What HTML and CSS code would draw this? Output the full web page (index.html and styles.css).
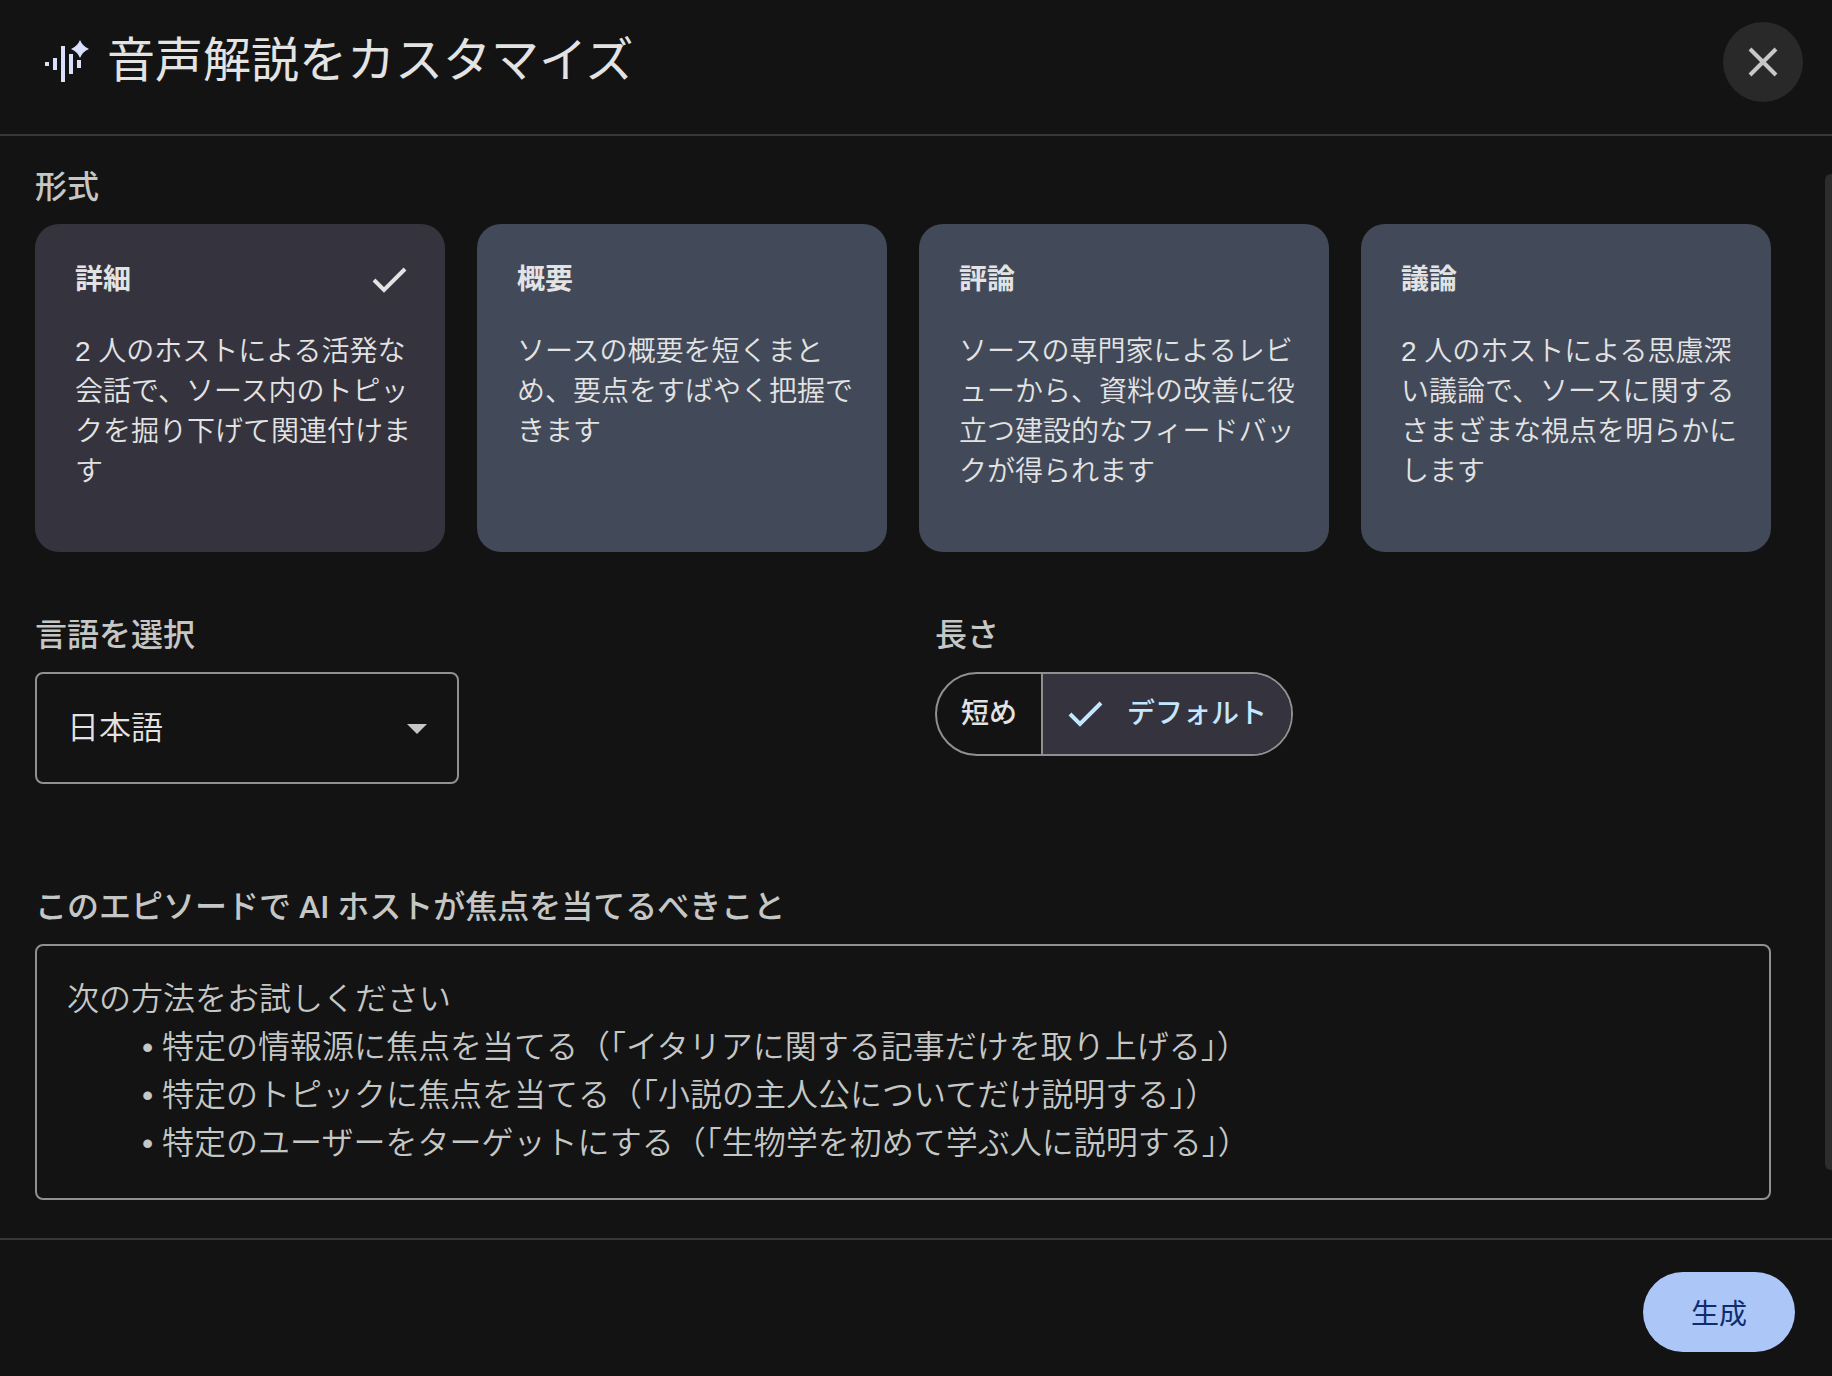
FILE: index.html
```html
<!DOCTYPE html>
<html lang="ja">
<head>
<meta charset="utf-8">
<title>音声解説をカスタマイズ</title>
<meta name="viewport" content="width=device-width, initial-scale=1">
<link rel="stylesheet" href="styles.css">
</head>
<body>
<form class="dialog">
  <header class="dialog-header">
    <svg class="audio-icon" viewBox="0 0 48 48" aria-hidden="true">
      <path d="M1 24h4v4H1zM9 20h4v12H9zM17 8h4v36h-4zM25 16h4v20h-4zM33 22h4v8h-4z"/>
      <path d="M36 2Q38.600 8.400 45 11Q38.600 13.600 36 20Q33.400 13.600 27 11Q33.400 8.400 36 2z"/>
    </svg>
    <h1 class="dialog-title">音声解説をカスタマイズ</h1>
    <button class="close-button" type="button" aria-label="閉じる">
      <svg class="close-icon" viewBox="0 0 32 32" aria-hidden="true"><path d="M3 3l26 26M29 3L3 29"/></svg>
    </button>
  </header>

  <main class="dialog-body">
    <fieldset class="group">
      <legend class="field-label">形式</legend>
      <div class="format-grid">
        <label class="format-card">
          <input class="visually-hidden" type="radio" name="format" value="deep" checked>
          <span class="card-head"><span class="card-title">詳細</span>
            <svg class="check-icon" viewBox="0 0 36 28" aria-hidden="true"><path d="M3 14l10 10L34 3"/></svg></span>
          <span class="card-text">2 人のホストによる活発な会話で、ソース内のトピックを掘り下げて関連付けます</span>
        </label>
        <label class="format-card">
          <input class="visually-hidden" type="radio" name="format" value="brief">
          <span class="card-head"><span class="card-title">概要</span></span>
          <span class="card-text">ソースの概要を短くまとめ、要点をすばやく把握できます</span>
        </label>
        <label class="format-card">
          <input class="visually-hidden" type="radio" name="format" value="critique">
          <span class="card-head"><span class="card-title">評論</span></span>
          <span class="card-text">ソースの専門家によるレビューから、資料の改善に役立つ建設的なフィードバックが得られます</span>
        </label>
        <label class="format-card">
          <input class="visually-hidden" type="radio" name="format" value="debate">
          <span class="card-head"><span class="card-title">議論</span></span>
          <span class="card-text">2 人のホストによる思慮深い議論で、ソースに関するさまざまな視点を明らかにします</span>
        </label>
      </div>
    </fieldset>

    <div class="options">
      <div class="group">
        <label class="field-label" for="language">言語を選択</label>
        <div class="select-box">
          <select class="select" id="language"><option>日本語</option></select>
          <svg class="select-arrow" viewBox="0 0 20 10" aria-hidden="true"><path d="M0 0h20L10 10z"/></svg>
        </div>
      </div>
      <fieldset class="group">
        <legend class="field-label">長さ</legend>
        <div class="segments">
          <label class="segment">
            <input class="visually-hidden" type="radio" name="length" value="short">
            <span class="segment-text">短め</span>
          </label>
          <label class="segment">
            <input class="visually-hidden" type="radio" name="length" value="default" checked>
            <svg class="check-icon" viewBox="0 0 36 28" aria-hidden="true"><path d="M3 14l10 10L34 3"/></svg>
            <span class="segment-text">デフォルト</span>
          </label>
        </div>
      </fieldset>
    </div>

    <div class="group">
      <label class="field-label" for="focus">このエピソードで AI ホストが焦点を当てるべきこと</label>
      <textarea class="focus-input" id="focus" placeholder="次の方法をお試しください
&#9;• 特定の情報源に焦点を当てる（「イタリアに関する記事だけを取り上げる」）
&#9;• 特定のトピックに焦点を当てる（「小説の主人公についてだけ説明する」）
&#9;• 特定のユーザーをターゲットにする（「生物学を初めて学ぶ人に説明する」）"></textarea>
    </div>
    <div class="scroll-thumb" aria-hidden="true"></div>
  </main>

  <footer class="dialog-footer">
    <button class="generate-button" type="submit">生成</button>
  </footer>
</form>
</body>
</html>
```
FILE: styles.css
```css
:root {
  --surface: #131313;
  --divider: #37373d;
  --outline: #8e918f;
  --text: #e3e3e3;
  --text-soft: #c4c7c5;
  --selected: #35343e;
  --card: #424a59;
  --accent: #c2e7ff;
}

* {
  box-sizing: border-box;
}

body {
  margin: 0;
  background: var(--surface);
  color: var(--text);
  font-family: Roboto, "Noto Sans CJK JP", sans-serif;
}

button,
select,
textarea {
  font: inherit;
  color: inherit;
}

.dialog {
  display: flex;
  flex-direction: column;
  min-height: 100vh;
}

.dialog-header {
  display: flex;
  align-items: center;
  gap: 15px;
  height: 136px;
  padding: 0 29px 10px 44px;
  border-bottom: 2px solid var(--divider);
}

.audio-icon {
  width: 48px;
  height: 48px;
  fill: #d8e0fb;
}

.dialog-title {
  flex: 1;
  margin: 0;
  padding-bottom: 2px;
  font-size: 48px;
  font-weight: 400;
  line-height: 64px;
}

.close-button {
  display: grid;
  place-items: center;
  width: 80px;
  height: 80px;
  padding: 0;
  border: 0;
  border-radius: 50%;
  background: #292929;
}

.close-icon {
  width: 32px;
  height: 32px;
  fill: none;
  stroke: #c7c7c7;
  stroke-width: 4;
}

.dialog-body {
  position: relative;
  flex: 1;
  display: flex;
  flex-direction: column;
  padding: 31px 61px 38px 35px;
}

.group {
  display: flex;
  flex-direction: column;
  min-width: 0;
  margin: 0;
  padding: 0;
  border: 0;
}

.field-label {
  display: block;
  margin-bottom: 17px;
  padding: 0;
  color: var(--text-soft);
  font-size: 32px;
  font-weight: 500;
  line-height: 40px;
}

.format-grid {
  display: grid;
  grid-template-columns: repeat(4, 1fr);
  gap: 32px;
}

.format-card {
  position: relative;
  display: flex;
  flex-direction: column;
  gap: 32px;
  min-height: 328px;
  padding: 36px 32px 32px 40px;
  border-radius: 24px;
  background: var(--card);
  font-size: 28px;
  line-height: 40px;
}

.format-card:has(:checked) {
  background: var(--selected);
}

.card-head {
  display: flex;
  align-items: center;
  justify-content: space-between;
  padding-right: 6px;
}

.card-title {
  font-weight: 700;
}

.card-text {
  font-family: "Liberation Sans", "Noto Sans CJK JP", sans-serif;
  font-weight: 350;
}

.check-icon {
  width: 36px;
  height: 28px;
  fill: none;
  stroke: currentColor;
  stroke-width: 4;
}

.options {
  display: grid;
  grid-template-columns: 1fr 1fr;
  gap: 64px;
  padding: 63px 0 103px;
}

.select-box {
  position: relative;
  width: 424px;
}

.select {
  appearance: none;
  width: 100%;
  height: 112px;
  padding: 0 80px 0 30px;
  border: 2px solid var(--outline);
  border-radius: 8px;
  background: transparent;
  font-size: 32px;
  font-weight: 350;
}

.select-arrow {
  position: absolute;
  top: 52px;
  right: 32px;
  width: 20px;
  height: 10px;
  fill: var(--text-soft);
  pointer-events: none;
}

.segments {
  display: flex;
  align-self: flex-start;
  height: 84px;
  overflow: hidden;
  border: 2px solid var(--outline);
  border-radius: 42px;
}

.segment {
  position: relative;
  display: flex;
  align-items: center;
  gap: 24px;
  padding: 0 24px;
  font-size: 28px;
  font-weight: 500;
}

.segment-text {
  padding-bottom: 6px;
}

.segment + .segment {
  border-left: 2px solid var(--outline);
}

.segment:has(:checked) {
  background: var(--selected);
  color: var(--accent);
}

.focus-input {
  width: 100%;
  height: 256px;
  padding: 29px 30px;
  border: 2px solid var(--outline);
  border-radius: 8px;
  background: transparent;
  font-family: "Liberation Sans", "Noto Sans CJK JP", sans-serif;
  font-size: 32px;
  font-weight: 350;
  line-height: 48px;
  tab-size: 75px;
  resize: none;
}

.focus-input::placeholder {
  color: var(--text-soft);
  opacity: 1;
}

.scroll-thumb {
  position: absolute;
  top: 38px;
  right: 0;
  bottom: 68px;
  width: 7px;
  border-radius: 6px 0 0 6px;
  background: #2d2d2d;
}

.dialog-footer {
  display: flex;
  justify-content: flex-end;
  padding: 32px 37px 24px;
  border-top: 2px solid var(--divider);
}

.generate-button {
  width: 152px;
  height: 80px;
  padding: 0;
  border: 0;
  border-radius: 40px;
  background: #adc6f8;
  color: #0c2d6e;
  font-size: 28px;
  font-weight: 400;
}

.visually-hidden {
  position: absolute;
  width: 1px;
  height: 1px;
  margin: 0;
  opacity: 0;
}
```
